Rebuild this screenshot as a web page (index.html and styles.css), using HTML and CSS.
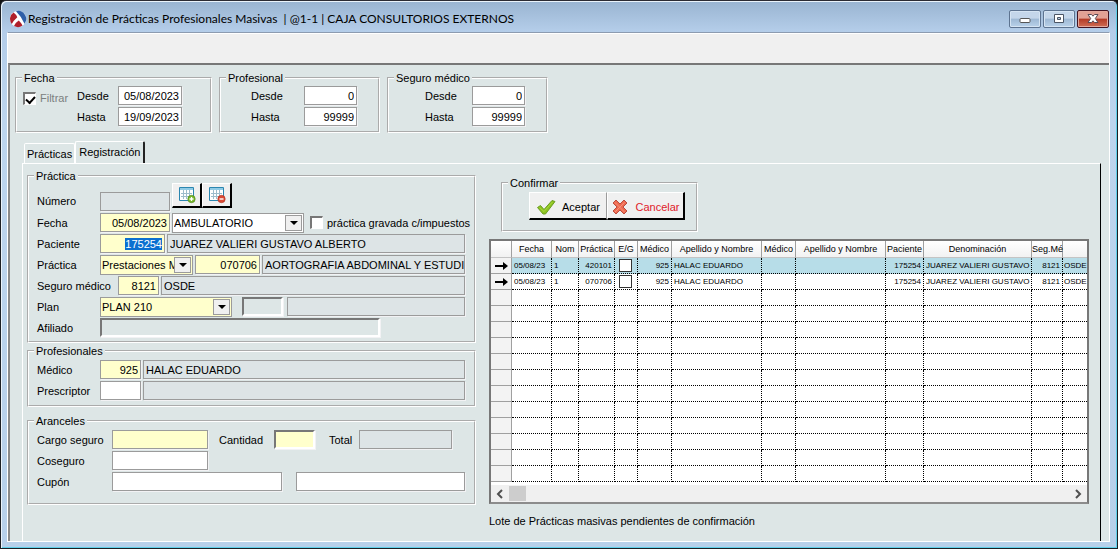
FILE: index.html
```html
<!DOCTYPE html>
<html lang="es">
<head>
<meta charset="utf-8">
<title>Registración de Prácticas Profesionales Masivas</title>
<link rel="stylesheet" href="styles.css">
</head>
<body>
<div class="window">
  <header class="titlebar">
    <svg class="app-icon" width="18" height="18" viewBox="0 0 18 18" aria-hidden="true">
      <circle cx="9" cy="9" r="8" fill="#fff"/>
      <path d="M7 1.200A8 8 0 0 1 15.500 13.700Q12 6 7 1.200Z" fill="#2f5fa8"/>
      <path d="M4.500 2.400Q7.500 4.500 8.300 7.200 4.500 10.500 2.800 14A8 8 0 0 1 4.500 2.400Z" fill="#b01f2b"/>
      <path d="M5 16Q6.500 12.500 9.700 10.500 12 12.500 13.500 15.600A8 8 0 0 1 5 16Z" fill="#b01f2b"/>
    </svg>
    <h1 class="title">Registración de Prácticas Profesionales Masivas&nbsp; | @1-1 | CAJA CONSULTORIOS EXTERNOS</h1>
    <div class="win-buttons">
      <button class="win-btn" type="button" aria-label="Minimizar"><svg width="12" height="12" viewBox="0 0 12 12"><rect x="1" y="5.500" width="10" height="4" rx="1" fill="#fff" stroke="#555"/></svg></button>
      <button class="win-btn" type="button" aria-label="Maximizar"><svg width="12" height="12" viewBox="0 0 12 12"><path d="M1.500 1.500h9v8h-9zM4.500 4.500h3v2h-3z" fill="#fff" fill-rule="evenodd" stroke="#4b5565"/></svg></button>
      <button class="win-btn win-close" type="button" aria-label="Cerrar"><svg width="12" height="12" viewBox="0 0 12 12"><path d="M1 1.500h3.500L6 3.200l1.500-1.700H11L8.300 5.500 11 9.500H7.500L6 7.800 4.500 9.500H1l2.700-4z" fill="#fff" stroke="#5a4a55"/></svg></button>
    </div>
  </header>
  <div class="client">
    <div class="toolbar"></div>
    <main class="workspace">
      <section class="filters">
        <fieldset class="group filter-date">
          <legend>Fecha</legend>
          <div class="filter-body">
            <label class="tick muted"><input type="checkbox" checked>Filtrar</label>
            <div class="range">
              <label for="f-desde">Desde</label><input class="box num" id="f-desde" value="05/08/2023">
              <label for="f-hasta">Hasta</label><input class="box num" id="f-hasta" value="19/09/2023">
            </div>
          </div>
        </fieldset>
        <fieldset class="group filter-code">
          <legend>Profesional</legend>
          <div class="range">
            <label for="p-desde">Desde</label><input class="box num" id="p-desde" value="0">
            <label for="p-hasta">Hasta</label><input class="box num" id="p-hasta" value="99999">
          </div>
        </fieldset>
        <fieldset class="group filter-code insurer">
          <legend>Seguro médico</legend>
          <div class="range">
            <label for="s-desde">Desde</label><input class="box num" id="s-desde" value="0">
            <label for="s-hasta">Hasta</label><input class="box num" id="s-hasta" value="99999">
          </div>
        </fieldset>
      </section>

      <div class="tabs" role="tablist">
        <button class="tab" type="button" role="tab" aria-selected="false">Prácticas</button>
        <button class="tab active" type="button" role="tab" aria-selected="true">Registración</button>
      </div>

      <div class="tab-panel" role="tabpanel">
        <div class="form-col">
          <fieldset class="group practice">
            <legend>Práctica</legend>
            <div class="row first">
              <label for="numero">Número</label>
              <input class="box flat w70" id="numero" readonly>
              <span class="tools">
                <button class="raised tool" type="button" aria-label="Agregar"><svg width="18" height="18" viewBox="0 0 18 18"><path d="M1.500 1.500h14v13h-14z" fill="#fff" stroke="#2b86b0"/><path d="M2 2h13v2H2z" fill="#8fcbe6"/><path d="M3 7.500h11M3 10.500h11M5.500 4v9M8.500 4v9M11.500 4v9" stroke="#9dbccb"/><circle cx="13.500" cy="13" r="3.700" fill="#7ab82c" stroke="#47801a" stroke-width=".6"/><path d="M11.500 13h4M13.500 11v4" stroke="#fff" stroke-width="1.300"/></svg></button>
                <button class="raised tool" type="button" aria-label="Quitar"><svg width="18" height="18" viewBox="0 0 18 18"><path d="M1.500 1.500h14v13h-14z" fill="#fff" stroke="#2b86b0"/><path d="M2 2h13v2H2z" fill="#8fcbe6"/><path d="M3 7.500h11M3 10.500h11M5.500 4v9M8.500 4v9M11.500 4v9" stroke="#9dbccb"/><circle cx="13.500" cy="13" r="3.700" fill="#dc4a35" stroke="#a92d1d" stroke-width=".6"/><path d="M11.500 13h4" stroke="#fff" stroke-width="1.400"/></svg></button>
              </span>
            </div>
            <div class="row">
              <label for="fecha">Fecha</label>
              <input class="box num yellow w70" id="fecha" value="05/08/2023">
              <span class="combo w132"><select aria-label="Modalidad"><option>AMBULATORIO</option></select><span class="drop"></span></span>
              <label class="tick taxed"><input type="checkbox">práctica gravada c/impuestos</label>
            </div>
            <div class="row">
              <label for="paciente">Paciente</label>
              <input class="box num yellow w66" id="paciente" value="175254">
              <input class="box flat grow" aria-label="Nombre del paciente" value="JUAREZ VALIERI GUSTAVO ALBERTO" readonly>
            </div>
            <div class="row">
              <label for="tipo">Práctica</label>
              <span class="combo yellow w93"><select id="tipo"><option>Prestaciones M</option></select><span class="drop"></span></span>
              <input class="box num yellow w66" aria-label="Código de práctica" value="070706">
              <input class="box flat grow" aria-label="Descripción de práctica" value="AORTOGRAFIA ABDOMINAL Y ESTUDI" readonly>
            </div>
            <div class="row wide-label">
              <label for="seguro">Seguro médico</label>
              <input class="box num yellow w42" id="seguro" value="8121">
              <input class="box flat grow" aria-label="Nombre del seguro" value="OSDE" readonly>
            </div>
            <div class="row">
              <label for="plan">Plan</label>
              <span class="combo yellow w132"><select id="plan"><option>PLAN 210</option></select><span class="drop"></span></span>
              <input class="box sunken w42 plan-code" aria-label="Código de plan" readonly>
              <input class="box flat grow" aria-label="Detalle de plan" readonly>
            </div>
            <div class="row">
              <label for="afiliado">Afiliado</label>
              <input class="box sunken affiliate" id="afiliado">
            </div>
          </fieldset>

          <fieldset class="group doctors">
            <legend>Profesionales</legend>
            <div class="row">
              <label for="medico">Médico</label>
              <input class="box num yellow w42" id="medico" value="925">
              <input class="box flat grow" aria-label="Nombre del médico" value="HALAC EDUARDO" readonly>
            </div>
            <div class="row">
              <label for="prescriptor">Prescriptor</label>
              <input class="box num w42" id="prescriptor">
              <input class="box flat grow" aria-label="Nombre del prescriptor" readonly>
            </div>
          </fieldset>

          <fieldset class="group fees">
            <legend>Aranceles</legend>
            <div class="row">
              <label for="cargo">Cargo seguro</label>
              <input class="box num yellow w96" id="cargo">
              <label class="qty-label" for="cantidad">Cantidad</label>
              <input class="box num yellow sunken w42" id="cantidad">
              <label class="total-label" for="total">Total</label>
              <input class="box flat w93" id="total" readonly>
            </div>
            <div class="row">
              <label for="coseguro">Coseguro</label>
              <input class="box num w96" id="coseguro">
            </div>
            <div class="row coupon">
              <label for="cupon">Cupón</label>
              <input class="box grow" id="cupon">
              <input class="box grow" aria-label="Detalle de cupón">
            </div>
          </fieldset>
        </div>

        <div class="list-col">
          <fieldset class="group confirm">
            <legend>Confirmar</legend>
            <div class="actions">
              <button class="raised action" type="button"><svg width="20" height="18" viewBox="0 0 20 18"><path d="M1.500 9.500 4.500 7.500l3.500 4L16 2.500l3 1L9.500 16H7z" fill="#8cc21f" stroke="#6d9d25"/><path d="M3.500 9.500 8 13.500 16.500 4" fill="none" stroke="#a8d83c"/></svg>Aceptar</button>
              <button class="raised action cancel" type="button"><svg width="18" height="18" viewBox="0 0 18 18"><path d="M2 5 5 2l4 4 4-4 3 3-4 4 4 4-3 3-4-4-4 4-3-3 4-4z" fill="#ee6a50" stroke="#b94d40" stroke-linejoin="round"/><path d="m4 4.500 9.500 9.500M13.500 4.500 4 14" stroke="#f7907a"/></svg>Cancelar</button>
            </div>
          </fieldset>

          <div class="grid">
            <table>
              <colgroup><col class="c-mark"><col class="c-date"><col class="c-nom"><col class="c-prac"><col class="c-eg"><col class="c-med"><col class="c-name"><col class="c-med"><col class="c-name"><col class="c-pac"><col class="c-den"><col class="c-seg"><col></colgroup>
              <thead><tr><th></th><th>Fecha</th><th>Nom</th><th>Práctica</th><th>E/G</th><th>Médico</th><th>Apellido y Nombre</th><th>Médico</th><th>Apellido y Nombre</th><th>Paciente</th><th>Denominación</th><th>Seg.Mé</th><th></th></tr></thead>
              <tbody>
                <tr class="current"><td><svg width="13" height="10" viewBox="0 0 13 10"><path d="M0 4h8V1l5 4-5 4V6H0z"/></svg></td><td>05/08/23</td><td>1</td><td class="r">420101</td><td class="c"><input type="checkbox" aria-label="E/G fila 1"></td><td class="r">925</td><td>HALAC EDUARDO</td><td></td><td></td><td class="r">175254</td><td>JUAREZ VALIERI GUSTAVO</td><td class="r">8121</td><td>OSDE</td></tr>
                <tr><td><svg width="13" height="10" viewBox="0 0 13 10"><path d="M0 4h8V1l5 4-5 4V6H0z"/></svg></td><td>05/08/23</td><td>1</td><td class="r">070706</td><td class="c"><input type="checkbox" aria-label="E/G fila 2"></td><td class="r">925</td><td>HALAC EDUARDO</td><td></td><td></td><td class="r">175254</td><td>JUAREZ VALIERI GUSTAVO</td><td class="r">8121</td><td>OSDE</td></tr>
                <tr><td></td><td></td><td></td><td></td><td></td><td></td><td></td><td></td><td></td><td></td><td></td><td></td><td></td></tr>
                <tr><td></td><td></td><td></td><td></td><td></td><td></td><td></td><td></td><td></td><td></td><td></td><td></td><td></td></tr>
                <tr><td></td><td></td><td></td><td></td><td></td><td></td><td></td><td></td><td></td><td></td><td></td><td></td><td></td></tr>
                <tr><td></td><td></td><td></td><td></td><td></td><td></td><td></td><td></td><td></td><td></td><td></td><td></td><td></td></tr>
                <tr><td></td><td></td><td></td><td></td><td></td><td></td><td></td><td></td><td></td><td></td><td></td><td></td><td></td></tr>
                <tr><td></td><td></td><td></td><td></td><td></td><td></td><td></td><td></td><td></td><td></td><td></td><td></td><td></td></tr>
                <tr><td></td><td></td><td></td><td></td><td></td><td></td><td></td><td></td><td></td><td></td><td></td><td></td><td></td></tr>
                <tr><td></td><td></td><td></td><td></td><td></td><td></td><td></td><td></td><td></td><td></td><td></td><td></td><td></td></tr>
                <tr><td></td><td></td><td></td><td></td><td></td><td></td><td></td><td></td><td></td><td></td><td></td><td></td><td></td></tr>
                <tr><td></td><td></td><td></td><td></td><td></td><td></td><td></td><td></td><td></td><td></td><td></td><td></td><td></td></tr>
                <tr><td></td><td></td><td></td><td></td><td></td><td></td><td></td><td></td><td></td><td></td><td></td><td></td><td></td></tr>
                <tr><td></td><td></td><td></td><td></td><td></td><td></td><td></td><td></td><td></td><td></td><td></td><td></td><td></td></tr>
              </tbody>
            </table>
            <div class="scrollbar">
              <button type="button" aria-label="Desplazar a la izquierda"><svg width="8" height="10" viewBox="0 0 8 10"><path d="M6 1 2 5l4 4" fill="none" stroke="#505050" stroke-width="2"/></svg></button>
              <span class="thumb"></span>
              <button type="button" aria-label="Desplazar a la derecha"><svg width="8" height="10" viewBox="0 0 8 10"><path d="m2 1 4 4-4 4" fill="none" stroke="#505050" stroke-width="2"/></svg></button>
            </div>
          </div>
          <p class="note">Lote de Prácticas masivas pendientes de confirmación</p>
        </div>
      </div>
    </main>
  </div>
</div>
<script src="app.js"></script>
</body>
</html>
```

FILE: styles.css
```css
* { box-sizing: border-box; }

body {
  margin: 0;
  background: #111;
  color: #000;
  font: 11px/14px "Liberation Sans", Arial, sans-serif;
}

input, select, button { font: inherit; color: inherit; margin: 0; }

.window {
  display: flex;
  flex-direction: column;
  min-height: 100vh;
  padding: 0 7px 6px 6px;
  border: 1px solid #1c1f24;
  border-top-color: #2b2b33;
  border-radius: 6px 6px 0 0;
  background: linear-gradient(#99b4d1, #b4cde9 30px, #bdd5ee 120px, #b7d0ea);
  box-shadow: inset 1px 1px 0 #eaf3fb, inset -1px -1px 0 #5fd0ea;
}

.titlebar {
  display: flex;
  align-items: center;
  gap: 1px;
  height: 31px;
  padding: 5px 1px 0 2px;
}

.app-icon { flex: none; }

.title {
  flex: 1;
  margin: 0;
  font: 12px/18px Lato, "Segoe UI", sans-serif;
  white-space: nowrap;
}

.win-buttons { display: flex; gap: 2px; }

.win-btn {
  display: grid;
  place-items: center;
  width: 32px;
  height: 18px;
  padding: 0;
  border: 1px solid #5d7390;
  border-radius: 2px;
  background: linear-gradient(#c4d6ea 45%, #9db8d4 50%, #b9d2ea);
  box-shadow: inset 0 0 0 1px #d5e4f3;
}

.win-close {
  border-color: #431422;
  background: linear-gradient(#e2a195 45%, #b33a26 50%, #cf6d55);
  box-shadow: inset 0 0 0 1px #e3a89d;
}

.client {
  display: flex;
  flex: 1;
  flex-direction: column;
  border: 1px solid #fff;
  border-top-color: #8c9bb0;
}

.toolbar {
  height: 30px;
  border-top: 1px solid #fff;
  background: #f0f0f0;
}

.workspace {
  display: flex;
  flex: 1;
  flex-direction: column;
  padding: 6px 8px 0 5px;
  border: solid #696969;
  border-width: 2px 0 0 2px;
  border-color: #777 #777 #777 #8a8a8a;
  background: #dde6e6;
}

.group {
  min-width: 0;
  margin: 0;
  padding: 0;
  border: 2px groove #fff;
}

.group legend { margin-left: 5px; padding: 0 2px; }

.filters { display: flex; gap: 7px; }
.filter-date { width: 197px; }
.filter-code { width: 161px; }

.filter-body {
  display: flex;
  align-items: flex-start;
  justify-content: space-between;
  padding-left: 6px;
}

.range {
  display: grid;
  grid-template-columns: 41px 64px;
  row-gap: 2px;
  align-items: center;
  justify-content: end;
  padding: 1px 28px 5px 0;
}

.filter-code .range { grid-template-columns: 53px 53px; padding-right: 21px; }
.filter-code.insurer .range { grid-template-columns: 47px 53px; }
.range .box { width: 100%; }

.tick { display: flex; align-items: center; gap: 4px; white-space: nowrap; }
.filter-body .tick { padding-top: 6px; }
.muted { color: #7b8080; }

input[type="checkbox"] {
  display: grid;
  flex: none;
  place-items: center;
  width: 13px;
  height: 13px;
  appearance: none;
  border: 1px solid #fff;
  border-top: 2px solid #777;
  border-left: 2px solid #777;
  background: #fff;
}

input[type="checkbox"]:checked::before {
  width: 7px;
  height: 4px;
  border: solid #000;
  border-width: 0 0 2px 2px;
  content: "";
  transform: rotate(-48deg);
}

.box {
  flex: none;
  width: 64px;
  min-width: 0;
  height: 19px;
  padding: 0 3px;
  border: 1px solid #9b9b9b;
  border-radius: 0;
  outline: 0;
  background: #fff;
  box-shadow: 1px 1px 0 #f2f2f4;
}

.box::selection { background: #0a6fd0; color: #fff; }
.num { padding: 0 2px; text-align: right; }
.flat { padding: 0 0 0 2px; background: #dde4e6; }

.sunken {
  border: 2px solid #fff;
  border-top-color: #777;
  border-left-color: #777;
  background: #dde6e6;
}

.w42 { width: 41px; }
.w66 { width: 65px; }
.w70 { width: 70px; }
.w93 { width: 93px; }
.w96 { width: 96px; }
.w132 { width: 132px; }
.box.grow { flex: 1; width: 0; }

.tabs { display: flex; align-items: flex-end; padding: 8px 0 0 9px; }

.tab {
  height: 20px;
  padding: 0 2px;
  border: 1px solid #fff;
  border-bottom: 0;
  border-radius: 2px 2px 0 0;
  background: none;
}

.tab.active {
  height: 22px;
  padding: 0 3px 2px;
  border-right: 2px solid #222;
}

.tab-panel {
  display: flex;
  flex: 1;
  gap: 13px;
  margin-left: 7px;
  padding: 5px 11px 0 4px;
  border: 1px solid #fff;
  border-right-color: #000;
  border-bottom: 0;
}

.form-col { flex: none; width: 449px; }

.row {
  display: flex;
  gap: 2px;
  align-items: center;
  height: 21px;
  padding: 0 9px 0 8px;
}

.row > label:first-child { flex: none; width: 61px; }
.row.wide-label > label:first-child { width: 79px; }
.row.first { align-items: flex-end; height: 29px; padding-bottom: 1px; }
.row.first > label { padding-bottom: 3px; }
.practice { padding-bottom: 3px; }

.tools { display: flex; align-self: flex-start; }

.raised {
  display: flex;
  align-items: center;
  justify-content: center;
  padding: 0;
  border: solid #000;
  border-width: 1px 2px 2px 1px;
  border-top-color: #fff;
  border-left-color: #fff;
  background: #f0f0f0;
}

.tool { width: 30px; height: 25px; }

.combo {
  display: flex;
  flex: none;
  height: 20px;
  padding: 1px;
  border: 1px solid #9b9b9b;
  background: #fff;
}

.combo select {
  flex: 1;
  min-width: 0;
  padding: 0;
  appearance: none;
  border: 0;
  background: none;
}

.drop {
  display: grid;
  flex: none;
  place-items: center;
  width: 17px;
  border: 1px solid #9b9b9b;
  background: #f0f0f0;
}

.drop::before {
  border: 4px solid transparent;
  border-top-color: #000;
  border-bottom: 0;
  content: "";
}

.yellow { background: #ffffcc; }

.taxed { margin-left: 4px; }
.plan-code { margin: 0 2px 0 8px; }
.affiliate { width: 280px; }

.doctors { margin-top: 1px; padding: 1px 0 4px; }
.fees { margin-top: 7px; padding: 1px 0 11px; }
.fees .row > label:first-child { width: 73px; }
.row .qty-label { width: 55px; padding-left: 9px; margin-right: 7px; }
.row .total-label { width: 40px; padding-left: 12px; }
.coupon .box + .box { margin-left: 12px; }

.list-col { flex: 1; min-width: 0; padding-top: 7px; }
.confirm { width: 197px; margin-left: 12px; }
.actions { display: flex; padding: 2px 0 10px 26px; }

.action {
  gap: 6px;
  width: 78px;
  height: 28px;
  padding-top: 3px;
}

.action:first-child { border-right: 1px solid #9b9b9b; }
.action.cancel { color: #e0202a; }

.grid {
  margin-top: 7px;
  overflow: hidden;
  border: 2px solid #777;
  border-bottom-color: #8c8c8c;
  background: #fff;
}

.grid table {
  width: 100%;
  table-layout: fixed;
  border-collapse: separate;
  border-spacing: 0;
}

.c-mark { width: 21px; }
.c-date { width: 40px; }
.c-nom { width: 27px; }
.c-prac { width: 36px; }
.c-eg { width: 23px; }
.c-med { width: 34px; }
.c-name { width: 90px; }
.c-pac { width: 38px; }
.c-den { width: 108px; }
.c-seg { width: 31px; }

.grid th {
  height: 17px;
  padding: 0;
  border-right: 1px solid #a0a0a0;
  border-bottom: 1px solid #c4c4c4;
  background: linear-gradient(#fff, #f2f2f2);
  font-size: 9px;
  font-weight: 400;
  line-height: 12px;
  white-space: nowrap;
}

.grid td {
  height: 16px;
  padding: 0 2px;
  overflow: hidden;
  border-right: 1px dotted #000;
  border-bottom: 1px dotted #000;
  font-size: 8px;
  line-height: 12px;
  white-space: nowrap;
}

.grid tr > :last-child { padding: 0 0 0 1px; border-right: 0; }

.grid td:first-child {
  padding: 0 0 0 4px;
  border-right: 1px solid #a0a0a0;
  border-bottom: 1px solid #a0a0a0;
  background: #f3f3f3;
}

.grid td svg { display: block; }
.grid .current td { background: #b7dde8; }
.grid .current td:first-child { background: #f3f3f3; }
.grid .r { text-align: right; }
.grid .c { padding: 0 4px; }
.grid td input[type="checkbox"] { border: 1px solid #333; }

.scrollbar {
  display: flex;
  align-items: center;
  height: 17px;
  margin-top: 3px;
  background: #f0f0f0;
}

.scrollbar button {
  display: grid;
  place-items: center;
  width: 18px;
  height: 17px;
  padding: 0;
  border: 0;
  background: none;
}

.scrollbar button:last-child { margin-left: auto; }
.thumb { width: 17px; height: 15px; background: #cdcdcd; }

.note { margin: 10px 0 6px; }
```

FILE: app.js
```js
const patient = document.getElementById("paciente");
patient.focus();
patient.select();
```
